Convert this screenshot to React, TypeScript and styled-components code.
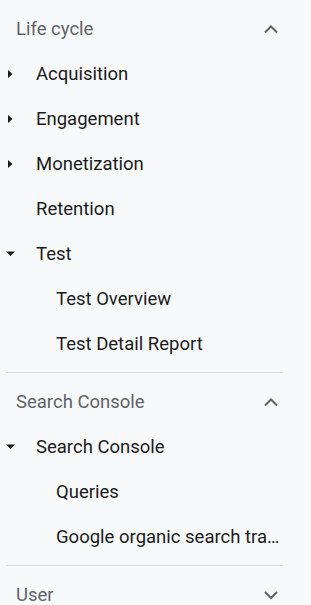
import React from "react";
import styled, { createGlobalStyle } from "styled-components";

const Global = createGlobalStyle`
  html, body { margin: 0; padding: 0; background: #f8f9fb; }
  body { font-family: Roboto, "Noto Sans", Arial, sans-serif; -webkit-font-smoothing: antialiased; }
`;

const Nav = styled.nav`
  width: 277px;
  margin-left: 6px;
  display: flex;
  flex-direction: column;
`;

const Section = styled.section`
  padding: 6px 0;
  border-bottom: 1px solid #dadce0;
  &:last-child { border-bottom: none; }
`;

const Header = styled.div`
  height: 45px;
  display: flex;
  align-items: center;
  justify-content: space-between;
  padding: 0 5px 0 10px;
  color: #5f6368;
  font-size: 18.5px;
`;

const Row = styled.div<{ $level: number }>`
  height: 45px;
  margin-right: -9px;
  display: flex;
  align-items: center;
  color: #1b1b1b;
  font-size: 18.5px;
  padding-left: ${(p) => (p.$level === 2 ? 50 : 0)}px;
  white-space: nowrap;
  overflow: hidden;
`;

const CaretSlot = styled.span`
  width: 30px;
  flex: none;
  display: flex;
  align-items: center;
  justify-content: flex-start;
`;

const Label = styled.span`
  overflow: hidden;
  text-overflow: ellipsis;
  min-width: 0;
`;

const Caret = ({ open }: { open: boolean }) =>
  open ? (
    <svg width="10" height="6" viewBox="0 0 10 6">
      <path d="M0 0.5h9L4.5 5z" fill="#1b1b1b" />
    </svg>
  ) : (
    <svg width="8" height="10" viewBox="0 0 8 10">
      <path d="M2 1v8l4.5-4z" fill="#1b1b1b" />
    </svg>
  );

const Chevron = ({ up }: { up: boolean }) => (
  <svg width="14" height="10" viewBox="0 0 14 10">
    <path
      d={up ? "M1 8.5L7 2.5l6 6" : "M1 2l6 6 6-6"}
      fill="none"
      stroke="#5f6368"
      strokeWidth="2"
    />
  </svg>
);

type Item = { label: string; caret?: "open" | "closed"; level?: number };

const Group = ({ title, open, items }: { title: string; open: boolean; items: Item[] }) => (
  <Section>
    <Header>
      <span>{title}</span>
      <Chevron up={open} />
    </Header>
    {items.map((it) => (
      <Row key={it.label} $level={it.level ?? 1}>
        {(it.level ?? 1) === 1 && (
          <CaretSlot>{it.caret && <Caret open={it.caret === "open"} />}</CaretSlot>
        )}
        <Label>{it.label}</Label>
      </Row>
    ))}
  </Section>
);

export default function App() {
  return (
    <>
      <Global />
      <Nav>
        <Group
          title="Life cycle"
          open
          items={[
            { label: "Acquisition", caret: "closed" },
            { label: "Engagement", caret: "closed" },
            { label: "Monetization", caret: "closed" },
            { label: "Retention" },
            { label: "Test", caret: "open" },
            { label: "Test Overview", level: 2 },
            { label: "Test Detail Report", level: 2 },
          ]}
        />
        <Group
          title="Search Console"
          open
          items={[
            { label: "Search Console", caret: "open" },
            { label: "Queries", level: 2 },
            { label: "Google organic search traffic", level: 2 },
          ]}
        />
        <Group title="User" open={false} items={[]} />
      </Nav>
    </>
  );
}
